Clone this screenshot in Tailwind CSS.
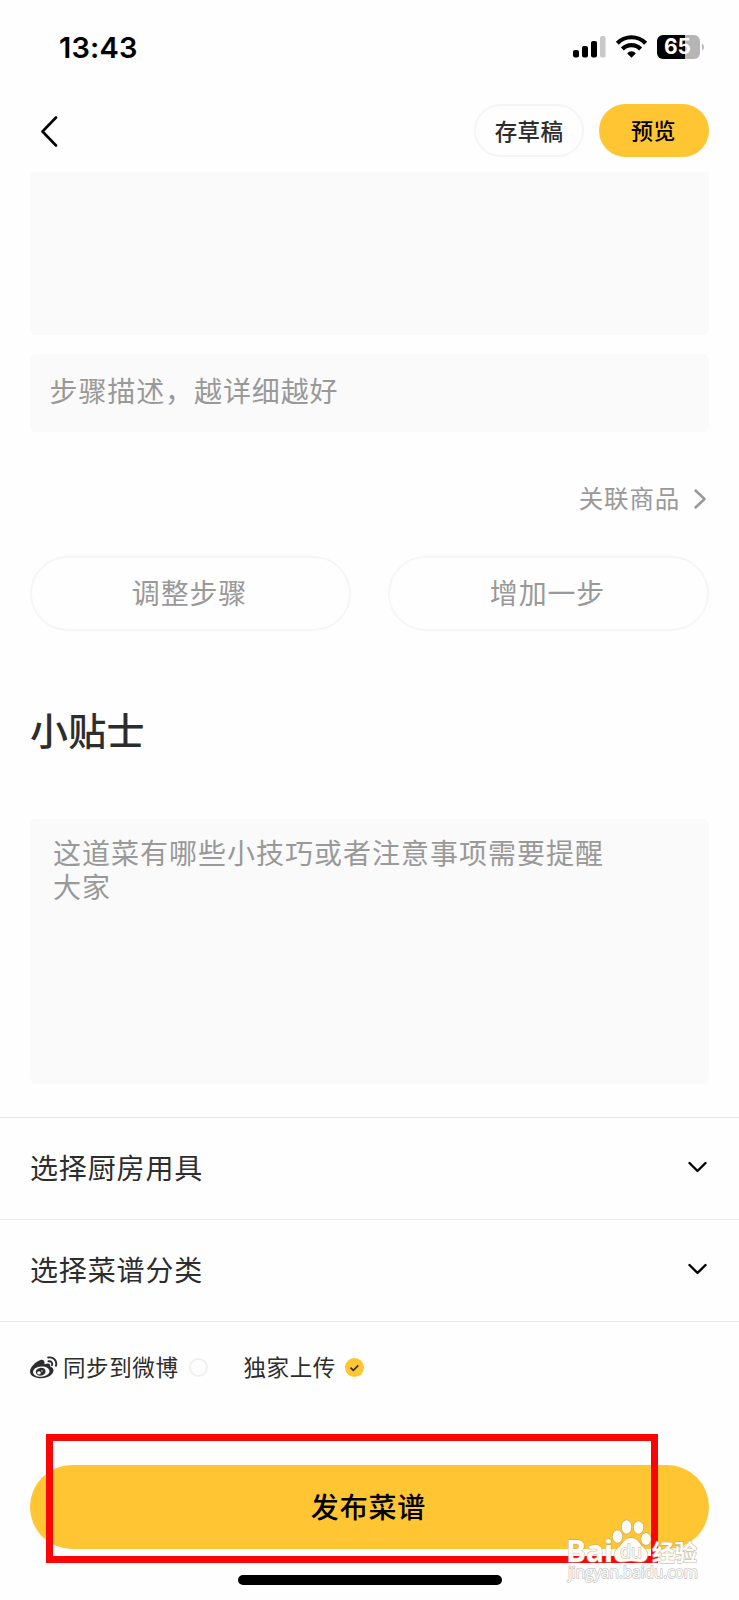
<!DOCTYPE html>
<html lang="zh-CN">
<head>
  <meta charset="UTF-8">
  <meta name="viewport" content="width=device-width, initial-scale=1.0">
  <title>发布菜谱</title>
  <script src="https://cdn.jsdelivr.net/npm/@tailwindcss/browser@4"></script>
</head>
<body class="bg-[#fefefe] font-['Noto_Sans_CJK_SC',sans-serif] text-[#2d2d2d]">
  <div class="relative w-[739px] h-[1600px] overflow-hidden flex flex-col">

    <!-- Status bar -->
    <div class="h-[94px] shrink-0 flex items-center justify-between pl-[59px] pr-[34px]">
      <span class="font-[Inter,sans-serif] font-semibold text-[29px] tracking-[.2px] leading-none text-black">13:43</span>
      <svg class="w-[133px] h-6" viewBox="0 0 133 24">
        <rect x="1" y="15" width="6" height="7.500" rx="2"/>
        <rect x="10" y="11" width="6" height="11.500" rx="2"/>
        <rect x="19" y="6" width="6" height="16.500" rx="2"/>
        <rect x="28" y="1" width="5.500" height="21.500" rx="2" fill="#c9c9c9"/>
        <g fill="none" stroke="#000" stroke-width="4.200">
          <path d="M45.300 8.300C53 .2 66 .2 73.700 8.300"/>
          <path d="M50.400 14C55.500 8.800 63.500 8.800 68.600 14"/>
        </g>
        <path d="M59.500 22.800l-4.300-4.300c2.300-3 6.300-3 8.600 0z"/>
        <path d="M91 0h19v24H91a6 6 0 01-6-6V6a6 6 0 016-6z"/>
        <path d="M113 0h9a6 6 0 016 6v12a6 6 0 01-6 6h-9z" fill="#b5b5b5"/>
        <path d="M110 0h3v24h-3z"/>
        <path d="M130 8.500c2.500 1 2.500 6 0 7z" fill="#b5b5b5"/>
        <text x="105.500" y="19.300" text-anchor="middle" fill="#fff" class="font-[Inter,sans-serif] font-bold text-[21px]">65</text>
      </svg>
    </div>

    <!-- Nav -->
    <div class="h-[78px] shrink-0 flex items-start pt-[10px] pl-10 pr-[30px]">
      <svg class="w-5 h-8 mt-[11px]" viewBox="0 0 20 32" fill="none" stroke="#000" stroke-width="2.600" stroke-linecap="round" stroke-linejoin="round">
        <path d="M16 2.500L2.500 16.500l13.500 14"/>
      </svg>
      <button class="ml-auto w-[110px] h-[53px] rounded-full border-2 border-[#f5f5f5] font-medium text-[22.5px] tracking-[.4px] leading-none">存草稿</button>
      <button class="ml-[15px] w-[110px] h-[53px] pb-[3px] pr-[1px] rounded-full bg-[#ffc533] font-medium text-[22px] tracking-[.4px] leading-none text-black">预览</button>
    </div>

    <!-- Step editor -->
    <div class="px-[30px] flex flex-col">
      <div class="h-[163px] rounded-b-md bg-[#fafafa]"></div>
      <div class="mt-[19px] h-[78px] rounded-md bg-[#fafafa] pl-[19.5px] pt-[18px] text-[28px] tracking-[.9px] leading-[36px] text-[#999]">步骤描述，越详细越好</div>
      <div class="mt-[47px] h-10 flex items-center justify-end text-[#999]">
        <span class="pb-[2px] text-[24.5px] tracking-[.8px] leading-none">关联商品</span>
        <svg class="w-3 h-5 ml-[14px] mr-[3px]" viewBox="0 0 12 20" fill="none" stroke="currentColor" stroke-width="2.500" stroke-linecap="round" stroke-linejoin="round">
          <path d="M1.500 1.500L10.500 10l-9 8.500"/>
        </svg>
      </div>
      <div class="mt-[37px] grid grid-cols-2 gap-[37px]">
        <button class="h-[75px] pb-[3px] pr-[2px] rounded-full border-2 border-[#f6f6f6] text-[28px] tracking-[.85px] leading-none text-[#999]">调整步骤</button>
        <button class="h-[75px] pb-[3px] pr-[2px] rounded-full border-2 border-[#f6f6f6] text-[28px] tracking-[.85px] leading-none text-[#999]">增加一步</button>
      </div>
      <h2 class="mt-[73px] h-[50px] font-medium text-[38px] leading-[50px] tracking-[.3px]">小贴士</h2>
      <div class="mt-[65px] h-[265px] rounded-md bg-[#fafafa] pl-[23px] pr-[90px] pt-[17px] text-[28px] tracking-[1px] leading-[33.5px] text-[#999]">这道菜有哪些小技巧或者注意事项需要提醒大家</div>
    </div>

    <!-- Select rows -->
    <div class="mt-[33px] text-[28px] tracking-[.85px] leading-none">
      <div class="h-[102px] border-t border-[#e6e6e6] flex items-center justify-between pl-[30px] pr-8 pb-[3px]">
        <span class="pb-[1px]">选择厨房用具</span>
        <svg class="w-5 h-3" viewBox="0 0 20 12" fill="none" stroke="#000" stroke-width="2.400" stroke-linecap="round" stroke-linejoin="round"><path d="M2.500 2l8 8 8-8"/></svg>
      </div>
      <div class="h-[102px] border-t border-[#ececec] flex items-center justify-between pl-[30px] pr-8 pb-[3px]">
        <span class="pb-[1px]">选择菜谱分类</span>
        <svg class="w-5 h-3" viewBox="0 0 20 12" fill="none" stroke="#000" stroke-width="2.400" stroke-linecap="round" stroke-linejoin="round"><path d="M2.500 2l8 8 8-8"/></svg>
      </div>
    </div>

    <!-- Share options -->
    <div class="h-[92px] border-t border-[#e8e8e8] flex items-center pl-[30px] text-[22.5px] tracking-[.6px] leading-none">
      <svg class="w-[28px] h-[23px]" viewBox="0 0 28 23" fill="#2d2d2d">
        <path fill-rule="evenodd" d="M10.500 4C6 5.500 0 11 0 15.500 0 20 5.500 22.300 11 22.300c7.500 0 12.500-4.300 12.500-7.800 0-2.200-1.700-3.300-3.400-3.900.8-2.600-.9-4.200-5.700-2.400C15 4.800 13.500 3.200 10.500 4zM11 10.500c4.600-.4 8.300 1.700 8.500 4.600.2 2.900-3.400 5.400-8 5.700-4.600.3-8.300-1.700-8.500-4.600-.2-2.900 3.400-5.400 8-5.700z"/>
        <path fill-rule="evenodd" d="M10.200 11.900c-2.700.4-4.700 2.300-4.300 4.600.4 2.200 2.700 3.500 5.300 3.100 2.700-.4 4.700-2.500 4.300-4.700-.3-2.200-2.600-3.500-5.300-3zM9 15.200a1.800 1.600 0 110 3.300 1.800 1.600 0 010-3.300zM12 14.200a.8.700 0 110 1.400.8.700 0 010-1.400z"/>
        <path d="M18.200 1.500c5.200-1 9.300 3.200 7.700 8.400M18.500 5.300c2.500-.5 4.300 1.400 3.500 3.900" fill="none" stroke="#2d2d2d" stroke-width="1.900" stroke-linecap="round"/>
      </svg>
      <span class="ml-[5px] pb-[2px]">同步到微博</span>
      <span class="ml-[10.5px] size-[19px] rounded-full border-2 border-[#f0f0f0]"></span>
      <span class="ml-[35.500px] pb-[2px]">独家上传</span>
      <svg class="size-[19px] ml-[9px]" viewBox="0 0 19 19"><circle cx="9.500" cy="9.500" r="9.500" fill="#ffc533"/><path d="M5.500 9.700l2.800 2.700 5-5" fill="none" stroke="#2d2d2d" stroke-width="1.600"/></svg>
    </div>

    <!-- Publish -->
    <button class="mt-[52px] mx-[30px] h-[84px] pb-[2px] pr-[2px] shrink-0 rounded-full bg-[#ffc533] font-medium text-[28px] tracking-[.85px] leading-none text-black">发布菜谱</button>
    <div class="mt-[26px] mx-auto w-[264px] h-[10px] shrink-0 rounded-full bg-black"></div>

    <!-- Highlight frame -->
    <div class="absolute left-[46px] top-[1434px] w-[612px] h-[129px] border-[7.5px] border-[#f90606]"></div>

    <!-- Watermark -->
    <svg class="absolute left-[560px] top-[1510px] w-[150px] h-[80px]" viewBox="0 0 150 80" fill="#fffdf6" stroke="#a9a08c" stroke-opacity=".6" stroke-width="1.400" stroke-linejoin="round" paint-order="stroke">
      <text x="6" y="52" class="font-['Open_Sans',sans-serif] font-bold text-[31px]" textLength="47" lengthAdjust="spacingAndGlyphs">Bai</text>
      <ellipse cx="57.500" cy="26.500" rx="4.800" ry="6.200"/>
      <ellipse cx="66.500" cy="17" rx="4.800" ry="6.800"/>
      <ellipse cx="78.500" cy="17.500" rx="4.800" ry="6.200"/>
      <ellipse cx="86" cy="29" rx="4.800" ry="6"/>
      <path d="M71 28c7 0 8 6 13 10 6 5 4 14-3 14-4 0-6-1-10-1s-6 1-10 1c-7 0-9-9-3-14 5-4 6-10 13-10z"/>
      <text x="60" y="48" class="font-['Open_Sans',sans-serif] text-[18px]" textLength="22" lengthAdjust="spacingAndGlyphs">du</text>
      <text x="92" y="51" class="font-['Noto_Sans_CJK_SC',sans-serif] font-bold text-[22.5px]">经验</text>
      <text x="8" y="68" stroke="#c4c4c4" stroke-opacity="1" class="font-['Open_Sans',sans-serif] text-[16px]" textLength="130" lengthAdjust="spacingAndGlyphs">jingyan.baidu.com</text>
    </svg>
  </div>
</body>
</html>
